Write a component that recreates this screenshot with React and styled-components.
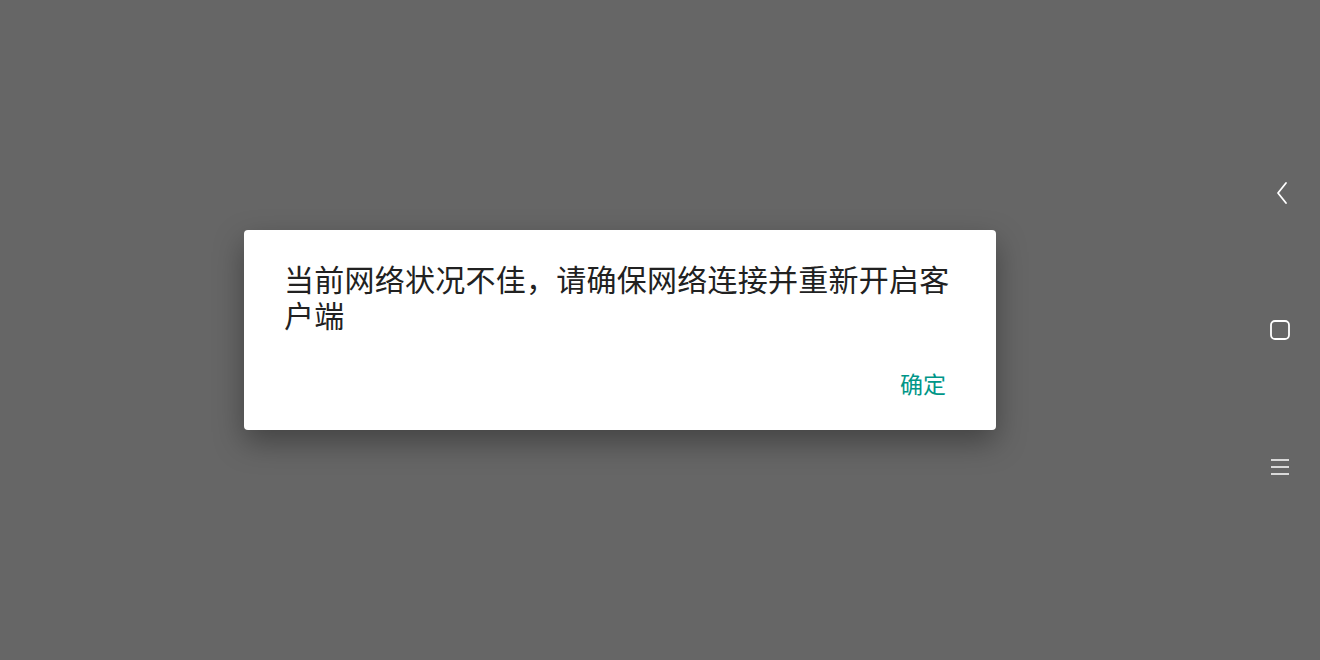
import React from 'react'
import styled, { createGlobalStyle } from 'styled-components'

const GlobalStyle = createGlobalStyle`
  html, body {
    margin: 0;
    padding: 0;
    background: #666666;
    font-family: "Noto Sans CJK SC", "Noto Sans", sans-serif;
  }
`

const Screen = styled.div`
  width: 1320px;
  height: 660px;
  display: flex;
  flex-direction: row;
  background: #666666;
  overflow: hidden;
`

const Stage = styled.div`
  flex: 1;
  display: flex;
  align-items: center;
  justify-content: center;
`

const Dialog = styled.div`
  width: 752px;
  box-sizing: border-box;
  padding: 30px 38px 0 40px;
  background: #ffffff;
  border-radius: 4px;
  box-shadow: 0 12px 30px rgba(0, 0, 0, 0.35);
`

const Message = styled.div`
  font-size: 30px;
  line-height: 36px;
  letter-spacing: 0.25px;
  color: #212121;
`

const Actions = styled.div`
  display: flex;
  justify-content: flex-end;
  padding: 36px 12px 32px;
`

const TextButton = styled.button`
  border: none;
  background: none;
  padding: 0;
  font-family: inherit;
  font-size: 23px;
  line-height: 30px;
  color: #009688;
  cursor: pointer;
`

const NavBar = styled.div`
  width: 80px;
  display: flex;
  flex-direction: column;
  align-items: center;
  justify-content: center;
  gap: 113px;
`

const NavIcon = styled.svg`
  width: 24px;
  height: 24px;
  display: block;
  margin-left: ${p => p.$shift || 0}px;
`

export default function App() {
  return (
    <>
      <GlobalStyle />
      <Screen>
        <Stage>
          <Dialog>
            <Message>当前网络状况不佳，请确保网络连接并重新开启客户端</Message>
            <Actions>
              <TextButton>确定</TextButton>
            </Actions>
          </Dialog>
        </Stage>
        <NavBar>
          <NavIcon $shift={3} viewBox="0 0 24 24" fill="none" stroke="#fff" strokeWidth="1.8" strokeLinecap="round" strokeLinejoin="round">
            <path d="M16 2 L8 12 L16 22" />
          </NavIcon>
          <NavIcon viewBox="0 0 24 24" fill="none" stroke="#fff" strokeWidth="1.8">
            <rect x="3" y="3" width="18" height="18" rx="4" />
          </NavIcon>
          <NavIcon viewBox="0 0 24 24" fill="none" stroke="#fff" strokeWidth="1.6">
            <path d="M3 5 H21 M3 12 H21 M3 19 H21" />
          </NavIcon>
        </NavBar>
      </Screen>
    </>
  )
}
